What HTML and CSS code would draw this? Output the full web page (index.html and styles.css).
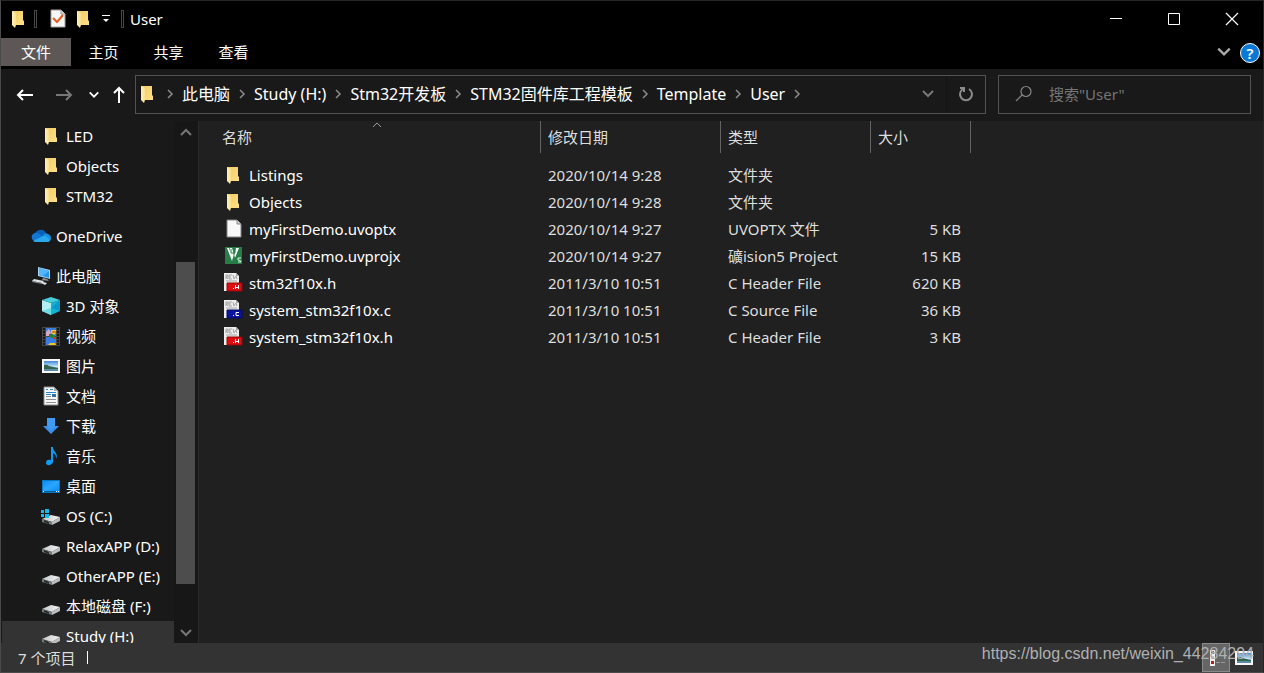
FILE: index.html
```html
<!DOCTYPE html>
<html lang="zh-CN">
<head>
<meta charset="utf-8">
<title>User</title>
<link rel="stylesheet" href="styles.css">
</head>
<body>
<svg class="defs" aria-hidden="true">
  <defs>
    <linearGradient id="g-folder" x1="0" y1="0" x2="1" y2="1"><stop offset="0" stop-color="#f2cb63"/><stop offset="1" stop-color="#ffe08a"/></linearGradient>
    <linearGradient id="g-fold" x1="0" y1="0" x2="1" y2="0"><stop offset="0" stop-color="#fff0b8"/><stop offset="1" stop-color="#fbdf8e"/></linearGradient>
    <linearGradient id="g-sky" x1="0" y1="0" x2="0" y2="1"><stop offset="0" stop-color="#3f86dc"/><stop offset=".55" stop-color="#c4e6f6"/><stop offset="1" stop-color="#4f86a6"/></linearGradient>
    <linearGradient id="g-desk" x1="0" y1="0" x2="1" y2="1"><stop offset="0" stop-color="#0d8cf0"/><stop offset=".5" stop-color="#2ba6ff"/><stop offset="1" stop-color="#0b8df2"/></linearGradient>
    <linearGradient id="g-drive" x1="0" y1="0" x2="1" y2="0"><stop offset="0" stop-color="#c4c6c8"/><stop offset="1" stop-color="#f4f4f4"/></linearGradient>
  </defs>
  <symbol id="folder" viewBox="0 0 20 20"><path d="M4 2h11v9l1 1v4H6z" fill="url(#g-folder)"/><path d="M4 2l4 2v12l-1 3-3-3z" fill="url(#g-fold)"/></symbol>
  <symbol id="onedrive" viewBox="0 0 20 20"><path d="M4 8a6 6 0 0 1 11-1l-4 5z" fill="#0a5fb8"/><path d="M4 15a4 4 0 0 1-2-7q2-2 5-1l6 4-8 5z" fill="#1078d4"/><path d="M12 9q2-3 5-1 3 1 3 4 0 3-3 4z" fill="#1490df"/><path d="M2 15l10-5q2-1 4 1l3 3q-1 2-3 2H5q-2 0-3-1z" fill="#2aa8ec"/></symbol>
  <symbol id="pc" viewBox="0 0 20 20"><path d="M7 1l12 3v9L7 10z" fill="#a8d7f7"/><path d="M8 2l10 3v7L8 9z" fill="#2797ee"/><path d="M8 2l10 3-6 5-4-1z" fill="#55b5fa"/><path d="M12 12l4 1 2 2-7-1z" fill="#8d9499"/><path d="M3 13l10 2-2 2-10-2zM12 16l4 1-2 2-4-2z" fill="#dce2e5"/><path d="M1 15l10 2v1L1 16z" fill="#858c91"/></symbol>
  <symbol id="cube" viewBox="0 0 20 20"><path d="M1 4l9 3v12l-9-4z" fill="#b3eef0"/><path d="M10 7l9-3v11l-9 4z" fill="#15b3d1"/><path d="M10 1l9 3-9 3-9-3z" fill="#45cddd"/><path d="M10 12v7l-9-4z" fill="#6ddde5"/><path d="M10 12l9-8v11z" fill="#0898c9"/></symbol>
  <symbol id="video" viewBox="0 0 20 20"><path d="M1 1h18v19H1z" fill="#454545"/><path d="M5 2h10v8H5zM5 11h10v8H5z" fill="#397ce3"/><path d="M3 2v18M17 2v18" stroke="#171717" stroke-width="2" stroke-dasharray="2 1"/><path d="M5 6l3-3 2 4-2 3H5z" fill="#d8a9bf"/><path d="M10 4h5v3l-2 2-3-2z" fill="#f0c827"/><path d="M11 6h4M11 11h4" stroke="#c33b28" stroke-width="1"/><path d="M8 8h3l3 2v2h-4l-2-2z" fill="#247f3a"/><path d="M12 11h3v2h-3z" fill="#cb3a24"/><path d="M7 19l2-2h5l1 2z" fill="#efc522"/></symbol>
  <symbol id="picture" viewBox="0 0 20 20"><path d="M1 3h18v14H1z" fill="#f7f7f7"/><path d="M3 5h14v10H3z" fill="url(#g-sky)"/><path d="M3 9q3-1 5 1l9 2v1H3z" fill="#32654e"/><path d="M3 13h14v2H3z" fill="#5c8ca5"/></symbol>
  <symbol id="document" viewBox="0 0 20 20"><path d="M3 1h10l4 4v14H3z" fill="#f7f7f7" stroke="#8e8e8e"/><path d="M13 1v4h4z" fill="#aaa"/><path d="M5 3.500h2M9 3.500h3M5 6.500h10M5 8.500h5" stroke="#2489cf"/><path d="M11 8h4v3h-4z" fill="#31759e"/><path d="M5 10.500h5M5 13.500h10M5 16.500h10" stroke="#8a9297"/></symbol>
  <symbol id="download" viewBox="0 0 20 20"><path d="M6 2h8v8h4l-8 8-8-8h4z" fill="#3a92e8"/><path d="M6 2h8v8l-4 4-4-4z" fill="#3f9cf3"/></symbol>
  <symbol id="music" viewBox="0 0 20 20"><path d="M10 1h2c0 5 6 6 3 12 0-4-1-5-3-6v9c-1 4-7 4-7 1 0-3 2-4 5-3z" fill="#109bf5"/></symbol>
  <symbol id="desktop" viewBox="0 0 20 20"><path d="M1 4h18v13H1z" fill="#0877c6"/><path d="M2 5h16v10H2z" fill="url(#g-desk)"/><path d="M2 15h16v1H2z" fill="#0b5d9a"/><path d="M2 15h1v1H2zM15 15h1v1h-1zM17 15h1v1h-1z" fill="#fff"/></symbol>
  <symbol id="drive" viewBox="0 0 20 20"><path d="M1 13l9-4 9 2-8 5z" fill="url(#g-drive)"/><path d="M1 13l10 3v3L1 16z" fill="#74797b"/><path d="M11 16l8-5v4l-8 4z" fill="#bbbdbe"/><path d="M3 14l5 2v2l-5-2z" fill="#252b2c"/><path d="M8 16h1v2H8z" fill="#18ca28"/></symbol>
  <symbol id="osdrive" viewBox="0 0 20 20"><use href="#drive"/><path d="M0 4h3v3H0zM4 3h4v4H4zM0 8h3v3H0zM4 8h4v4H4z" fill="#17b9ee"/></symbol>
  <symbol id="blank" viewBox="0 0 20 20"><path d="M4 1h10l4 4v13H4z" fill="#f8f8f8" stroke="#858585"/><path d="M14 1v4h4" fill="#d5d5d5" stroke="#858585"/></symbol>
  <symbol id="uvision" viewBox="0 0 20 20"><path d="M2 1h17v17H2z" fill="#287c48"/><path d="M4 2l5 13 2-7 1 4 4-10h-3l-2 6-2-6H7v3L6 2z" fill="#f3fff5"/><path d="M8 3v4h4V3M11 3v6" fill="none" stroke="#287c48"/><path d="M18 12h-3v2q3 0 3 2h-3" fill="none" stroke="#d7f8df"/></symbol>
  <symbol id="source-sheet" viewBox="0 0 20 20"><path d="M1 0h12l3 3v15H1z" fill="#eee"/><path d="M13 0v3h3" fill="#aaa"/><path d="M3 6V2h2v2H3l2 2M9 2H6v4h3M6 4h2M10 2l1 4 2-3 1 3M3 8h11" fill="none" stroke="#a5a5a5"/></symbol>
  <symbol id="hfile" viewBox="0 0 20 20"><use href="#source-sheet"/><path d="M4 10h15v8H4z" fill="#df0d12" stroke="#8e0909"/><path d="M10 15.500h1M12.500 12v4M15.500 12v4M13 14.500h3" stroke="#fff"/></symbol>
  <symbol id="cfile" viewBox="0 0 20 20"><use href="#source-sheet"/><path d="M4 10h15v8H4z" fill="#0c149f" stroke="#050a63"/><path d="M10 15.500h1M16 12.500h-3v3h3" fill="none" stroke="#fff"/></symbol>
  <symbol id="check" viewBox="0 0 20 20"><path d="M3 1h10l4 4v13H3z" fill="#f7f7f7" stroke="#a1a1a1"/><path d="M13 1v4h4" fill="#ddd" stroke="#999"/><path d="M5 9l4 4 6-7" fill="none" stroke="#e65a1c" stroke-width="2"/></symbol>
  <symbol id="right" viewBox="0 0 10 10"><path d="M3 1l4 4-4 4" fill="none" stroke="currentColor" stroke-width="1.5"/></symbol>
  <symbol id="down" viewBox="0 0 14 14"><path d="M2 4l5 5 5-5" fill="none" stroke="currentColor" stroke-width="2"/></symbol>
  <symbol id="arrow" viewBox="0 0 20 20"><path d="M18 10H3M8 5l-5 5 5 5" fill="none" stroke="currentColor" stroke-width="2"/></symbol>
</svg>

<div class="window">
  <header class="titlebar">
    <svg class="icon"><use href="#folder"/></svg>
    <span class="tick"></span>
    <div class="quick">
      <button aria-label="属性"><svg class="icon"><use href="#check"/></svg></button>
      <button aria-label="新建文件夹"><svg class="icon"><use href="#folder"/></svg></button>
      <button class="more" aria-label="自定义快速访问工具栏"><svg width="8" height="8" viewBox="0 0 8 8"><path d="M0 0h8v1H0z" fill="#fff"/><path d="M1 4h6L4 7z" fill="#fff"/></svg></button>
    </div>
    <span class="tick"></span>
    <span class="title">User</span>
    <div class="controls">
      <button aria-label="最小化"><svg width="14" height="14"><path d="M1 6.500h12" stroke="#fff"/></svg></button>
      <button aria-label="最大化"><svg width="14" height="14"><path d="M1.500 1.500h11v11h-11z" fill="none" stroke="#fff"/></svg></button>
      <button aria-label="关闭"><svg width="14" height="14"><path d="M1 1l12 12M13 1L1 13" stroke="#fff" stroke-width="1.2"/></svg></button>
    </div>
  </header>

  <nav class="ribbon">
    <button class="file">文件</button><button>主页</button><button>共享</button><button>查看</button>
    <button class="expand" aria-label="展开功能区"><svg width="16" height="16" viewBox="0 0 14 14"><use href="#down"/></svg></button>
    <button class="help" aria-label="帮助">?</button>
  </nav>

  <div class="toolbar">
    <div class="history">
      <button class="wide" aria-label="后退"><svg width="20" height="20"><use href="#arrow"/></svg></button>
      <button class="wide dim" aria-label="前进"><svg class="flip" width="20" height="20"><use href="#arrow"/></svg></button>
      <button class="narrow" aria-label="最近位置"><svg width="12" height="12"><use href="#down"/></svg></button>
      <button class="up" aria-label="上移"><svg class="turn" width="20" height="20"><use href="#arrow"/></svg></button>
    </div>
    <div class="address">
      <svg class="icon"><use href="#folder"/></svg>
      <svg class="sep"><use href="#right"/></svg><button>此电脑</button>
      <svg class="sep"><use href="#right"/></svg><button>Study (H:)</button>
      <svg class="sep"><use href="#right"/></svg><button>Stm32开发板</button>
      <svg class="sep"><use href="#right"/></svg><button>STM32固件库工程模板</button>
      <svg class="sep"><use href="#right"/></svg><button>Template</button>
      <svg class="sep"><use href="#right"/></svg><button>User</button>
      <svg class="sep"><use href="#right"/></svg>
      <button class="drop" aria-label="以前的位置"><svg width="14" height="14"><use href="#down"/></svg></button>
      <button class="refresh" aria-label="刷新"><svg width="18" height="18" viewBox="0 0 18 18" fill="none" stroke="#8b8b8b" stroke-width="2"><path d="M12 4a6 6 0 1 1-6 0"/><path d="M3 3h4v4"/></svg></button>
    </div>
    <label class="search">
      <svg width="18" height="18" fill="none" stroke="#858585" stroke-width="1.2"><circle cx="11" cy="6.500" r="5"/><path d="M7 10l-6 6"/></svg>
      <input type="text" placeholder='搜索"User"' aria-label="搜索">
    </label>
  </div>

  <main class="body">
    <aside class="tree">
      <ul>
        <li><a href="#"><svg class="icon"><use href="#folder"/></svg>LED</a></li>
        <li><a href="#"><svg class="icon"><use href="#folder"/></svg>Objects</a></li>
        <li><a href="#"><svg class="icon"><use href="#folder"/></svg>STM32</a></li>
        <li class="root"><a href="#"><svg class="icon"><use href="#onedrive"/></svg>OneDrive</a></li>
        <li class="root"><a href="#"><svg class="icon"><use href="#pc"/></svg>此电脑</a></li>
        <li><a href="#"><svg class="icon"><use href="#cube"/></svg>3D 对象</a></li>
        <li><a href="#"><svg class="icon"><use href="#video"/></svg>视频</a></li>
        <li><a href="#"><svg class="icon"><use href="#picture"/></svg>图片</a></li>
        <li><a href="#"><svg class="icon"><use href="#document"/></svg>文档</a></li>
        <li><a href="#"><svg class="icon"><use href="#download"/></svg>下载</a></li>
        <li><a href="#"><svg class="icon"><use href="#music"/></svg>音乐</a></li>
        <li><a href="#"><svg class="icon"><use href="#desktop"/></svg>桌面</a></li>
        <li><a href="#"><svg class="icon"><use href="#osdrive"/></svg>OS (C:)</a></li>
        <li><a href="#"><svg class="icon"><use href="#drive"/></svg>RelaxAPP (D:)</a></li>
        <li><a href="#"><svg class="icon"><use href="#drive"/></svg>OtherAPP (E:)</a></li>
        <li><a href="#"><svg class="icon"><use href="#drive"/></svg>本地磁盘 (F:)</a></li>
        <li class="current"><a href="#"><svg class="icon"><use href="#drive"/></svg>Study (H:)</a></li>
      </ul>
    </aside>
    <div class="scroll">
      <button aria-label="向上滚动"><svg class="over" width="14" height="14"><use href="#down"/></svg></button>
      <div class="track"><div class="thumb"></div></div>
      <button aria-label="向下滚动"><svg width="14" height="14"><use href="#down"/></svg></button>
    </div>
    <section class="files">
      <table>
        <colgroup><col class="c-name"><col class="c-date"><col class="c-type"><col class="c-size"></colgroup>
        <thead><tr>
          <th class="sorted">名称<svg class="sort" width="10" height="6"><path d="M1 5l4-4 4 4" fill="none" stroke="#999"/></svg></th>
          <th>修改日期</th><th>类型</th><th>大小</th>
        </tr></thead>
        <tbody>
          <tr><td><div class="name"><svg class="icon"><use href="#folder"/></svg>Listings</div></td><td>2020/10/14 9:28</td><td>文件夹</td><td></td></tr>
          <tr><td><div class="name"><svg class="icon"><use href="#folder"/></svg>Objects</div></td><td>2020/10/14 9:28</td><td>文件夹</td><td></td></tr>
          <tr><td><div class="name"><svg class="icon"><use href="#blank"/></svg>myFirstDemo.uvoptx</div></td><td>2020/10/14 9:27</td><td>UVOPTX 文件</td><td>5 KB</td></tr>
          <tr><td><div class="name"><svg class="icon"><use href="#uvision"/></svg>myFirstDemo.uvprojx</div></td><td>2020/10/14 9:27</td><td>礦ision5 Project</td><td>15 KB</td></tr>
          <tr><td><div class="name"><svg class="icon"><use href="#hfile"/></svg>stm32f10x.h</div></td><td>2011/3/10 10:51</td><td>C Header File</td><td>620 KB</td></tr>
          <tr><td><div class="name"><svg class="icon"><use href="#cfile"/></svg>system_stm32f10x.c</div></td><td>2011/3/10 10:51</td><td>C Source File</td><td>36 KB</td></tr>
          <tr><td><div class="name"><svg class="icon"><use href="#hfile"/></svg>system_stm32f10x.h</div></td><td>2011/3/10 10:51</td><td>C Header File</td><td>3 KB</td></tr>
        </tbody>
      </table>
    </section>
  </main>

  <footer class="status">
    <span>7 个项目</span><span class="bar"></span>
    <div class="views">
      <button class="on" aria-label="详细信息"><svg width="20" height="18"><path d="M4 1h5v16H4z" fill="#eee"/><path d="M5 2h3v3H5z" fill="#3578a8"/><path d="M5 7h3v3H5z" fill="#bbb"/><path d="M5 12h3v3H5z" fill="#b62020"/><path d="M10 13.500h4M15 13.500h4" stroke="#999"/></svg></button>
      <button aria-label="大图标"><svg class="icon"><use href="#picture"/></svg></button>
    </div>
    <span class="watermark">https://blog.csdn.net/weixin_44284294</span>
  </footer>
</div>
</body>
</html>
```
FILE: styles.css
```css
* { box-sizing: border-box; }

body {
  margin: 0;
  background: #191919;
  color: #fff;
  font: 15px/20px "Noto Sans", "Noto Sans CJK SC", sans-serif;
}

button {
  display: flex;
  align-items: center;
  justify-content: center;
  margin: 0;
  padding: 0;
  border: 0;
  background: none;
  color: inherit;
  font: inherit;
  white-space: nowrap;
}

svg { flex: none; display: block; }
.defs { position: absolute; width: 0; height: 0; }
.icon { width: 20px; height: 20px; }

.window {
  display: flex;
  flex-direction: column;
  height: 100vh;
  border: 1px solid #4a4a4a;
  border-top-color: #262626;
  border-right-color: #262626;
}

.titlebar {
  display: flex;
  align-items: center;
  height: 37px;
  padding: 0 2px 1px 7px;
  background: #000;
}
.tick {
  width: 3px;
  height: 18px;
  margin-left: 6px;
  border: 1px solid #484848;
}
.quick { display: flex; align-items: center; gap: 5px; margin-left: 11px; }
.quick .more { width: 15px; height: 20px; }
.quick + .tick { margin-left: 8px; }
.title { margin-left: 6px; }
.controls { display: flex; align-self: stretch; margin-left: auto; }
.controls button { width: 58px; }

.ribbon {
  display: flex;
  align-items: center;
  height: 31px;
  padding-bottom: 3px;
  background: #000;
}
.ribbon button { width: 65px; height: 28px; }
.ribbon .file { width: 70px; background: #5d5855; }
.ribbon .expand { width: 20px; margin-left: auto; color: #aaa; }
.ribbon .help {
  width: 20px;
  height: 20px;
  margin: 2px 3px 0 6px;
  border: 1px solid #fff;
  border-radius: 50%;
  background: #0a78d7;
  font-weight: 600;
}

.toolbar {
  display: flex;
  align-items: center;
  height: 52px;
  padding: 0 12px 2px 0;
}
.history {
  display: flex;
  flex: none;
  align-items: center;
  padding: 2px 1px 0 4px;
}
.history .wide { width: 39px; }
.history .narrow { width: 21px; }
.history .up { width: 30px; }
.dim { color: #777; }
.flip { transform: scaleX(-1); }
.turn { transform: rotate(90deg); }
.over { transform: rotate(180deg); }

.address {
  display: flex;
  flex: 1;
  align-items: center;
  height: 39px;
  min-width: 0;
  padding-left: 1px;
  border: 1px solid #535353;
  font-size: 16px;
}
.address .sep { width: 10px; height: 10px; margin: 0 7px; color: #8b8b8b; }
.address .icon + .sep { margin-left: 8px; }
.address .drop { width: 36px; height: 37px; margin-left: auto; color: #777; }
.address .refresh { width: 39px; height: 37px; border-left: 1px solid #141414; }

.search {
  display: flex;
  align-items: center;
  gap: 16px;
  width: 253px;
  height: 39px;
  margin-left: 12px;
  padding: 0 16px;
  border: 1px solid #535353;
}
.search input {
  flex: 1;
  min-width: 0;
  padding: 0;
  border: 0;
  outline: 0;
  background: none;
  color: #fff;
  font: inherit;
}
.search input::placeholder { color: #757575; opacity: 1; }

.body { display: flex; flex: 1; min-height: 0; }
.tree { flex: none; width: 173px; overflow: hidden; }
.tree ul { margin: 0; padding: 0; list-style: none; }
.tree a {
  display: flex;
  align-items: center;
  gap: 5px;
  height: 30px;
  margin-left: 1px;
  padding-left: 39px;
  color: inherit;
  text-decoration: none;
  white-space: nowrap;
}
.tree .root { padding-top: 10px; }
.tree .root a { padding-left: 29px; }
.tree .current a { background: #333; }

.scroll {
  display: flex;
  flex: none;
  flex-direction: column;
  width: 25px;
  padding: 0 3px 0 2px;
  border-right: 1px solid #2b2b2b;
  background: #171717;
}
.scroll button { height: 21px; color: #777; }
.track { display: flex; flex: 1; flex-direction: column; padding: 120px 0 38px; }
.thumb { flex: 1; background: #4d4d4d; }

.files { flex: 1; min-width: 0; background: #202020; overflow: hidden; }
table { width: 772px; table-layout: fixed; border-collapse: separate; border-spacing: 0; }
.c-name { width: 342px; }
.c-date { width: 180px; }
.c-type { width: 150px; }
.c-size { width: 100px; }
th {
  height: 32px;
  padding: 0 7px;
  border-right: 1px solid #636363;
  color: #dedede;
  font-weight: 400;
  text-align: left;
}
th.sorted { position: relative; padding-left: 23px; }
.sort { position: absolute; top: 1px; left: 173px; }
tbody::before { content: ""; display: block; height: 8px; }
td { height: 27px; padding: 0 7px; color: #dedede; white-space: nowrap; }
td:first-child { padding-left: 24px; }
td:last-child { padding-right: 10px; text-align: right; }
.name { display: flex; align-items: center; gap: 6px; color: #fff; }

.status {
  position: relative;
  display: flex;
  align-items: center;
  height: 29px;
  padding: 0 5px 0 17px;
  background: #333;
  color: #dedede;
}
.status .bar { width: 1px; height: 13px; margin-left: 12px; background: #fff; }
.views { display: flex; align-self: stretch; margin-left: auto; }
.views button { width: 28px; }
.views .on { border: 1px solid #8a8a8a; background: #666; }
.watermark {
  position: absolute;
  right: 9px;
  top: 0;
  color: #b0b0b0;
  font: 16px/22px "Liberation Sans", Arial, sans-serif;
}
```
